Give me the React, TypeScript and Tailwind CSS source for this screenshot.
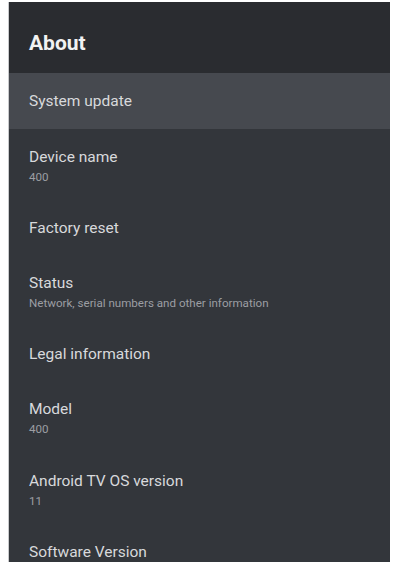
type Item = { title: string; sub?: string; selected?: boolean };

const items: Item[] = [
  { title: "System update", selected: true },
  { title: "Device name", sub: "400" },
  { title: "Factory reset" },
  { title: "Status", sub: "Network, serial numbers and other information" },
  { title: "Legal information" },
  { title: "Model", sub: "400" },
  { title: "Android TV OS version", sub: "11" },
  { title: "Software Version" },
];

function Row({ item }: { item: Item }) {
  if (item.sub) {
    return (
      <div className="flex h-[72px] flex-col pl-[20px] pt-[18px]">
        <span className="text-[15.5px] leading-5 text-[#d8d9dc]">{item.title}</span>
        <span className="mt-[3px] text-[11.6px] leading-[14px] text-[#9c9ea3]">{item.sub}</span>
      </div>
    );
  }
  return (
    <div
      className={
        item.selected
          ? "flex h-[56px] items-center bg-[#46494f] pl-[20px]"
          : "flex h-[54px] items-center pl-[20px]"
      }
    >
      <span className="text-[15.5px] leading-5 text-[#d8d9dc]">{item.title}</span>
    </div>
  );
}

export default function App() {
  return (
    <div
      className="h-[562px] w-[393px] overflow-hidden bg-white pl-[8px] pr-[3px] pt-[2px]"
      style={{ fontFamily: "Roboto, 'Noto Sans', sans-serif" }}
    >
      <div className="h-full border-l border-[#c9cacc] bg-[#33363b]">
        <div className="h-[71px] bg-[#2a2c30] pl-[20px] pt-[27px]">
          <h1 className="text-[21px] font-bold leading-7 text-[#f2f2f2]">About</h1>
        </div>
        {items.map((item) => (
          <Row key={item.title} item={item} />
        ))}
      </div>
    </div>
  );
}
